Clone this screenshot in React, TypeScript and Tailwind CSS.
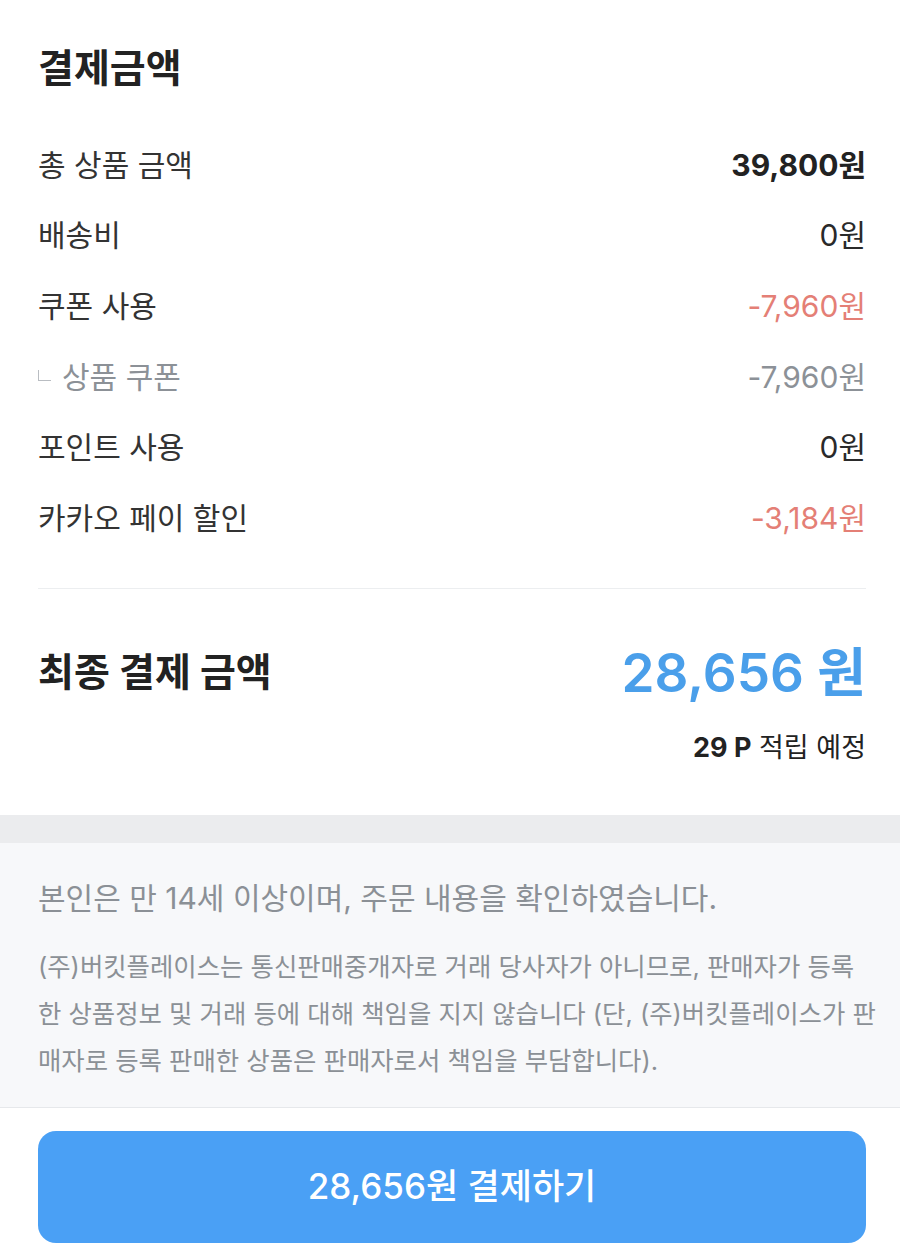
const rows = [
  { label: "총 상품 금액", value: "39,800원", tone: "strong" },
  { label: "배송비", value: "0원", tone: "normal" },
  { label: "쿠폰 사용", value: "-7,960원", tone: "red" },
  { label: "상품 쿠폰", value: "-7,960원", tone: "sub" },
  { label: "포인트 사용", value: "0원", tone: "normal" },
  { label: "카카오 페이 할인", value: "-3,184원", tone: "red" },
];

const valueClass: Record<string, string> = {
  strong: "font-bold text-[#222]",
  normal: "text-[#2a2a2a]",
  red: "text-[#e47f76]",
  sub: "text-[#8c9197]",
};

export default function App() {
  return (
    <div className="w-[900px] min-h-[1260px] bg-white font-['Inter','Noto_Sans_CJK_KR',sans-serif] text-[#333]">
      <section className="pl-[38px] pr-[34px] pt-[46px]">
        <h2 className="text-[39px] leading-[44px] font-bold text-[#222]">결제금액</h2>

        <div className="mt-[40px] flex flex-col">
          {rows.map((row) => (
            <div key={row.label} className="flex h-[70.6px] items-center justify-between">
              {row.tone === "sub" ? (
                <div className="flex items-center text-[30px] text-[#8c9197]">
                  <span className="mr-[11px] mb-[4px] h-[11px] w-[13px] border-b border-l border-[#b9bdc2]" />
                  {row.label}
                </div>
              ) : (
                <span className="text-[30px]">{row.label}</span>
              )}
              <span className={`text-[30px] ${valueClass[row.tone]}`}>{row.value}</span>
            </div>
          ))}
        </div>

        <div className="mt-[34px] h-px bg-[#eceef0]" />

        <div className="pt-[54px] pb-[51px]">
          <div className="flex items-center justify-between">
            <span className="text-[39px] font-bold text-[#222]">최종 결제 금액</span>
            <span className="text-[53px] leading-[60px] font-semibold text-[#4a9fea]">28,656 원</span>
          </div>
          <div className="mt-[29px] text-right text-[27px] leading-[32px] text-[#222]">
            <span className="font-bold">29 P</span> 적립 예정
          </div>
        </div>
      </section>

      <div className="h-[28px] bg-[#ebecee]" />

      <section className="border-b border-[#e6e8eb] bg-[#f7f8fa] pl-[38px] pr-[34px] pt-[38px] pb-[23px] text-[#8b9096]">
        <p className="text-[30px] leading-[34px]">본인은 만 14세 이상이며, 주문 내용을 확인하였습니다.</p>
        <p className="mt-[28px] text-[25.4px] leading-[47px]">
          <span className="block whitespace-nowrap">(주)버킷플레이스는 통신판매중개자로 거래 당사자가 아니므로, 판매자가 등록</span>
          <span className="block whitespace-nowrap">한 상품정보 및 거래 등에 대해 책임을 지지 않습니다 (단, (주)버킷플레이스가 판</span>
          <span className="block whitespace-nowrap">매자로 등록 판매한 상품은 판매자로서 책임을 부담합니다).</span>
        </p>
      </section>

      <div className="pl-[38px] pr-[34px] pt-[23px] pb-[17px]">
        <button className="flex h-[112px] w-full items-center justify-center rounded-[18px] bg-[#4aa0f5] text-[35px] font-medium text-white">
          28,656원 결제하기
        </button>
      </div>
    </div>
  );
}
